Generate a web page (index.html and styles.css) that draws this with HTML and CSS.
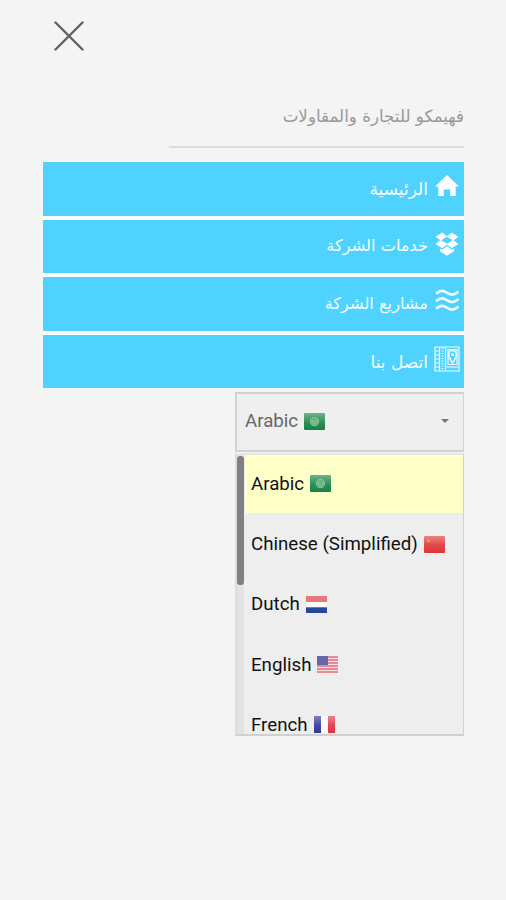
FILE: index.html
```
<!DOCTYPE html>
<html lang="ar">
<head>
<meta charset="utf-8">
<title>فهيمكو للتجارة والمقاولات</title>
<link rel="stylesheet" href="styles.css">
</head>
<body>
<svg width="0" height="0" class="defs">
  <defs>
    <linearGradient id="shine" x1="0" y1="0" x2="0" y2="1"><stop offset="0" stop-color="#fff" stop-opacity=".38"/><stop offset=".55" stop-color="#fff" stop-opacity=".1"/><stop offset="1" stop-color="#fff" stop-opacity="0"/></linearGradient>
    <symbol id="sa" viewBox="0 0 21 17"><rect width="21" height="17" rx="1" fill="#178347"/><rect width="21" height="17" fill="url(#shine)"/><circle cx="10.5" cy="8.5" r="4.2" fill="#67b47c" stroke="#8bcb98"/><path d="M8.500 7v2q2 2.500 4 0V7" fill="none" stroke="#8fcd9b"/></symbol>
    <symbol id="cn" viewBox="0 0 21 17"><rect width="21" height="17" rx="1" fill="#e03434"/><rect width="21" height="17" fill="url(#shine)"/><circle cx="4.5" cy="4.7" r="1.5" fill="#f39a55"/></symbol>
    <symbol id="nl" viewBox="0 0 21 17"><rect width="21" height="17" fill="#f8f8fa"/><path d="M0 0h21v6H0z" fill="#e8777b"/><path d="M0 11.3h21V17H0z" fill="#24499a"/></symbol>
    <symbol id="us" viewBox="0 0 21 17"><rect width="21" height="17" fill="#f4dfe4"/><path d="M0 1h21M0 4h21M0 7h21M0 10h21M0 13h21M0 16h21" stroke="#e0707e" stroke-width="1.5"/><path d="M0 0h11v9H0z" fill="#6469a8"/></symbol>
    <symbol id="fr" viewBox="0 0 21 17"><path d="M0 0h7v17H0z" fill="#30369a"/><path d="M7 0h7v17H7z" fill="#fafafc"/><path d="M14 0h7v17h-7z" fill="#dd3541"/><rect width="21" height="17" fill="url(#shine)"/></symbol>
  </defs>
</svg>
<main class="drawer">
  <svg class="close" viewBox="0 0 30 30"><path d="M1.500 1.500l27 27M28.500 1.500l-27 27"/></svg>
  <h1 class="brand" dir="rtl"><span>فهيمكو للتجارة والمقاولات</span></h1>
  <nav class="menu" dir="rtl">
    <a class="item"><svg class="icon" viewBox="0 0 26 26"><path class="solid" d="M13 2L25 13.500h-3.300V23h-5.500v-6.500H9.800V23H4.300v-9.500H1z"/></svg><span>الرئيسية</span></a>
    <a class="item"><svg class="icon" viewBox="0 0 26 26"><path class="solid" d="M8.300 1.500L13 5.300l4.700-3.800L24.500 5.700l-4.800 3.600L24.500 13l-6.800 4.300L13 13.500l-4.700 3.800L1.500 13l4.800-3.700L1.500 5.700zM13 5.800L7.200 9.300l5.800 3.500 5.800-3.500zM6 17.500l2.300 1.300L13 15l4.700 3.800L20 17.500v2.700l-7 4.500-7-4.500z" fill-rule="evenodd"/></svg><span class="narrow">خدمات الشركة</span></a>
    <a class="item"><svg class="icon" viewBox="0 0 26 26"><path class="waves" d="M3 5Q8 1 13 4.800t10.500-.5M3 12.500Q8 8.500 13 12.300t10.500-.5M3 20Q8 16 13 19.800t10.500-.5"/></svg><span class="narrow">مشاريع الشركة</span></a>
    <a class="item"><svg class="icon" viewBox="0 0 26 26"><path class="lines" d="M1 1h24v24H1zM5.500 1v24M11.500 1v24M1 5h4M1 9h4M1 13h4M1 17h4M1 21h4M14 3.500h9v15h-9zM12 21h12"/><path class="dots" d="M8.500 2v22"/><path class="pin" d="M18.500 17C12 8 15 4.500 18.500 4.500S25 8 18.500 17z"/><circle class="solid" cx="18.500" cy="8.500" r="1.500"/></svg><span>اتصل بنا</span></a>
  </nav>
  <section class="language">
    <div class="select"><span>Arabic</span><svg class="flag"><use href="#sa"/></svg><i class="caret"></i></div>
    <div class="dropdown">
      <div class="track"><div class="thumb"></div></div>
      <div class="options">
        <div class="option active"><span>Arabic</span><svg class="flag"><use href="#sa"/></svg></div>
        <div class="option"><span>Chinese (Simplified)</span><svg class="flag"><use href="#cn"/></svg></div>
        <div class="option"><span>Dutch</span><svg class="flag"><use href="#nl"/></svg></div>
        <div class="option"><span>English</span><svg class="flag"><use href="#us"/></svg></div>
        <div class="option"><span>French</span><svg class="flag"><use href="#fr"/></svg></div>
      </div>
    </div>
  </section>
</main>
</body>
</html>
```
FILE: styles.css
```
* { box-sizing: border-box; }
body { margin: 0; height: 900px; overflow: hidden; background: #f4f4f4; font-family: Roboto, "DejaVu Sans", sans-serif; }
.defs { display: block; height: 0; }
.drawer { padding: 21px 42px 0 43px; display: flex; flex-direction: column; }
.close { width: 30px; height: 30px; margin-left: 11px; fill: none; stroke: #606060; stroke-width: 2.4; stroke-linecap: round; }
.brand { width: 295px; height: 97px; margin: 0 0 14px; align-self: flex-end; border-bottom: 2px solid #dcdcdc; display: flex; align-items: flex-end; padding-bottom: 18px; font: 400 16.7px/24px "DejaVu Sans", sans-serif; color: #999; white-space: nowrap; }
.menu { display: flex; flex-direction: column; gap: 4px; background: #fafdfe; }
.item { height: 53.6px; display: flex; align-items: center; gap: 6px; padding-right: 4px; background: #50d2ff; color: #f3fcff; font: 17px/24px "DejaVu Sans", sans-serif; white-space: nowrap; }
.narrow { font-size: 16.2px; }
.icon { width: 26px; height: 26px; margin-top: -5px; fill: none; stroke: #effbff; stroke-width: 0; }
.solid { fill: #fafeff; stroke: none; }
.waves { stroke-width: 2.7; stroke-linecap: round; }
.lines { stroke-width: 1.2; }
.dots { stroke-width: 2; stroke-dasharray: 1 1.5; }
.pin { stroke-width: 1.5; }
.language { width: 229px; margin-top: 4px; align-self: flex-end; font-size: 18.7px; line-height: 24px; color: #111; }
.select { height: 60px; padding: 0 14px 2px 8px; border: 2px solid #d2d2d2; border-right-width: 1px; background: #efefef; display: flex; align-items: center; color: #666; }
.flag { width: 21px; height: 17px; margin-left: 6px; flex: none; }
.caret { margin-left: auto; border: 4px solid transparent; border-top-color: #777; border-bottom: 0; }
.dropdown { height: 283px; margin-top: 1px; border: 2px solid #d0d0d0; border-right-width: 1px; border-top-color: #e7e7e0; border-left-color: #ddd; background: #eee; display: flex; overflow: hidden; }
.track { width: 8px; flex: none; border-right: 1px solid #eee; background: #e3e3e3; }
.thumb { height: 129px; border-radius: 3px; background: #808080; margin-top: 1px; }
.options { flex: 1; }
.option { height: 60.3px; padding: 0 0 1px 6px; display: flex; align-items: center; white-space: nowrap; }
.active { height: 58px; background: #ffffc8; margin-bottom: 1px; }
```
